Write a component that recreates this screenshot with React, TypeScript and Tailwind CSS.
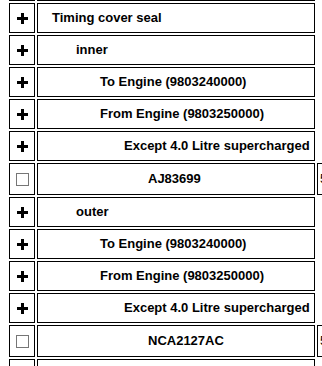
const ROWS: { kind: 'plus' | 'check'; level: number; text: string }[] = [
    { kind: 'plus', level: 0, text: 'Timing cover seal' },
    { kind: 'plus', level: 1, text: 'inner' },
    { kind: 'plus', level: 2, text: 'To Engine (9803240000)' },
    { kind: 'plus', level: 2, text: 'From Engine (9803250000)' },
    { kind: 'plus', level: 3, text: 'Except 4.0 Litre supercharged' },
    { kind: 'check', level: 4, text: 'AJ83699' },
    { kind: 'plus', level: 1, text: 'outer' },
    { kind: 'plus', level: 2, text: 'To Engine (9803240000)' },
    { kind: 'plus', level: 2, text: 'From Engine (9803250000)' },
    { kind: 'plus', level: 3, text: 'Except 4.0 Litre supercharged' },
    { kind: 'check', level: 4, text: 'NCA2127AC' },
    { kind: 'plus', level: 0, text: '' },
];

const INDENT = ['pl-[14px]', 'pl-[38px]', 'pl-[62px]', 'pl-[86px]', 'pl-[110px]'];

function Plus() {
    return (
        <svg width="11" height="11" viewBox="0 0 11 11">
            <rect x="0" y="4" width="11" height="3" fill="#000" />
            <rect x="4" y="0" width="3" height="11" fill="#000" />
        </svg>
    );
}

export default function App() {
    return (
        <div className="w-[322px] h-[366px] overflow-hidden bg-white font-['Liberation_Sans',Arial,sans-serif] text-[13px] text-black">
            <div className="flex flex-col gap-[2px] pl-[9px] w-[420px]">
                {/* bottom edge of the row above */}
                <div className="flex gap-[2px] h-[1px]">
                    <div className="w-[26px] border-b border-black" />
                    <div className="w-[278px] border-b border-black" />
                </div>

                {ROWS.map((row, i) => (
                    <div
                        key={i}
                        className={`flex gap-[2px] ${row.kind === 'check' ? 'h-[32px]' : 'h-[30px]'}`}
                    >
                        <div className="w-[26px] border border-black flex items-center justify-center">
                            {row.kind === 'plus' ? (
                                <Plus />
                            ) : (
                                <div className="w-[13px] h-[13px] border border-[#767676] bg-white" />
                            )}
                        </div>
                        <div className={`w-[278px] border border-black flex items-center font-bold whitespace-nowrap ${INDENT[row.level]}`}>
                            {row.text}
                        </div>
                        {row.kind === 'check' && (
                            <div className="w-[60px] border border-black flex items-center pl-[2px]">
                                5.00
                            </div>
                        )}
                    </div>
                ))}
            </div>
        </div>
    );
}
